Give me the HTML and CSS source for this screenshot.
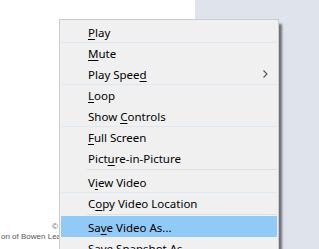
FILE: index.html
```html
<!DOCTYPE html>
<html lang="en">
<head>
  <meta charset="UTF-8" />
  <title>Video context menu</title>
  <link rel="stylesheet" href="styles.css">
</head>
<body>
<div class="page">
  <div class="doc">
    <p class="credit">
      <span class="copy">&copy; The Trustees of the British Museum</span>
      <span class="caption">on of Bowen Leaf, Lambeth</span>
    </p>
  </div>
  <div class="side"></div>

  <ul class="menu">
    <li class="item"><span><u>P</u>lay</span></li>
    <li class="item ruled"><span><u>M</u>ute</span></li>
    <li class="item"><span>Play Spee<u>d</u></span>
      <svg class="arrow" width="5" height="8" viewBox="0 0 5 8"><polyline points="0.5,0.5 4,4 0.5,7.5" fill="none" stroke="#555" stroke-width="1.1"/></svg>
    </li>
    <li class="item ruled"><span><u>L</u>oop</span></li>
    <li class="item"><span>Show <u>C</u>ontrols</span></li>
    <li class="item ruled"><span><u>F</u>ull Screen</span></li>
    <li class="item"><span>Pict<u>u</u>re-in-Picture</span></li>
    <li class="sep"></li>
    <li class="item"><span>V<u>i</u>ew Video</span></li>
    <li class="item ruled"><span>C<u>o</u>py Video Location</span></li>
    <li class="sep"></li>
    <li class="item active"><span>Sa<u>v</u>e Video As...</span></li>
    <li class="item"><span><u>S</u>ave Snapshot As...</span></li>
  </ul>
</div>
</body>
</html>
```

FILE: styles.css
```css
* { box-sizing: border-box; margin: 0; padding: 0; }
html, body {
  width: 319px;
  height: 249px;
  overflow: hidden;
}
body {
  font-family: "Noto Sans", sans-serif;
  background: #dfe3ec;
}
.page {
  position: relative;
  display: flex;
  height: 249px;
}
.doc {
  width: 195px;
  background: #fff;
  padding-top: 222px;
}
.side {
  flex: 1;
  background: #dfe3ec;
}
.credit {
  font-family: "Liberation Sans", Arial, sans-serif;
  font-size: 8px;
  line-height: 10px;
  color: #555;
  white-space: nowrap;
}
.credit span { display: block; }
.copy { padding-left: 52px; }
.caption { padding-left: 1px; }

/* context menu */
.menu {
  position: absolute;
  left: 59px;
  top: 19px;
  width: 220px;
  padding: 1px 1px 0;
  list-style: none;
  background: #f0f0f0;
  border: 1px solid #cccccc;
  box-shadow: 4px 4px 2px -1px rgba(0, 0, 0, 0.5);
}
.item {
  display: flex;
  align-items: center;
  justify-content: space-between;
  height: 21px;
  padding: 1px 9px 0 27px;
  font-size: 11.5px;
  color: #000;
  white-space: nowrap;
}
.item u {
  text-underline-offset: 2px;
}
.item.ruled {
  box-shadow: inset 0 1px 0 #dde8f5;
}
.item.active {
  background: #91c9f7;
}
.arrow { display: block; }
.sep {
  height: 1px;
  margin: 1px 0 1px 26px;
  background: #e0e0e0;
}
```
